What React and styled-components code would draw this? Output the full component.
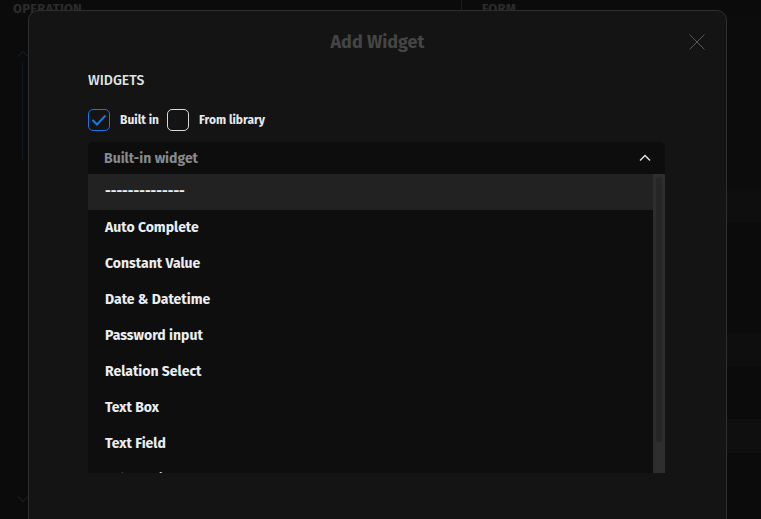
import styled, { createGlobalStyle } from 'styled-components';

const GlobalStyle = createGlobalStyle`
  html, body {
    margin: 0;
    padding: 0;
    background: #0b0b0b;
  }
  body {
    font-family: "Fira Sans", Roboto, "Noto Sans", sans-serif;
  }
`;

const Screen = styled.div`
  position: relative;
  width: 761px;
  height: 519px;
  overflow: hidden;
  background: #0b0b0b;
`;

// faint app behind the modal
const Backdrop = styled.div`
  display: grid;
  grid-template-columns: 462px 1fr;
  height: 100%;
`;

const LeftPane = styled.div`
  display: flex;
  flex-direction: column;
  padding: 1px 0 0 13px;
  border-right: 1px solid #1c1c1c;
`;

const RightPane = styled.div`
  display: flex;
  flex-direction: column;
  padding: 1px 0 0 20px;
`;

const PaneLabel = styled.div`
  font-size: 13px;
  font-weight: 700;
  color: #2c2c2c;
  letter-spacing: 0.2px;
`;

const SideRail = styled.div`
  display: flex;
  flex-direction: column;
  align-items: center;
  width: 20px;
  margin-top: 34px;
  flex: 1;
  padding-bottom: 16px;
`;

const RailLine = styled.div`
  width: 1px;
  height: 98px;
  margin: 4px 0 0 -2px;
  background: #101a26;
`;

const Spacer = styled.div`
  flex: 1;
`;

const BgRow = styled.div`
  height: ${(p) => p.h}px;
  margin-left: -20px;
  background: ${(p) => p.bg};
`;

const Modal = styled.div`
  position: absolute;
  left: 28px;
  top: 10px;
  width: 699px;
  height: 540px;
  background: #141414;
  border: 1px solid #2f2f2f;
  border-radius: 10px;
  box-sizing: border-box;
`;

const ModalHeader = styled.div`
  position: relative;
  height: 62px;
  display: flex;
  align-items: center;
  justify-content: center;
`;

const Title = styled.h2`
  margin: 0;
  font-size: 18px;
  font-weight: 700;
  color: #454545;
`;

const CloseButton = styled.button`
  position: absolute;
  right: 20px;
  top: 22px;
  width: 18px;
  height: 18px;
  padding: 0;
  border: none;
  background: none;
  display: flex;
`;

const ModalBody = styled.div`
  padding: 0 61px 0 59px;
`;

const SectionLabel = styled.div`
  font-size: 14px;
  line-height: 16px;
  font-weight: 500;
  color: #dfe3e6;
`;

const CheckRow = styled.div`
  display: flex;
  align-items: center;
  margin-top: 20px;
  height: 22px;
`;

const Check = styled.span`
  width: 22px;
  height: 22px;
  box-sizing: border-box;
  border: 1px solid ${(p) => (p.checked ? '#1677e5' : '#d9d9d9')};
  border-radius: 5px;
  display: flex;
  align-items: center;
  justify-content: center;
  margin-right: 10px;
`;

const CheckLabel = styled.span`
  font-size: 12px;
  font-weight: 700;
  color: #e6eaee;
  margin-right: 8px;
`;

const Select = styled.div`
  margin-top: 11px;
  width: 577px;
  border-radius: 6px 6px 0 0;
  background: #0e0e0e;
  overflow: hidden;
`;

const SelectHeader = styled.div`
  height: 32px;
  display: flex;
  align-items: center;
  justify-content: space-between;
  padding: 0 14px 0 16px;
  background: #0d0d0d;
`;

const Placeholder = styled.span`
  font-size: 14px;
  font-weight: 700;
  color: #858a8e;
`;

const ListWrap = styled.div`
  display: flex;
  height: 299px;
`;

const List = styled.ul`
  list-style: none;
  margin: 0;
  padding: 0;
  flex: 1;
  overflow: hidden;
`;

const Item = styled.li`
  height: 36px;
  box-sizing: border-box;
  display: flex;
  align-items: center;
  padding: 0 0 2px 17px;
  font-size: 14px;
  font-weight: 700;
  color: #e8eef2;
  background: ${(p) => (p.active ? '#222222' : 'transparent')};
`;

const Scrollbar = styled.div`
  width: 12px;
  background: #2e2e2e;
  display: flex;
  justify-content: center;
  padding-top: 3px;
  box-sizing: border-box;
`;

const Thumb = styled.div`
  width: 6px;
  height: 265px;
  border-radius: 3px;
  background: #262626;
`;

const items = [
  '--------------',
  'Auto Complete',
  'Constant Value',
  'Date & Datetime',
  'Password input',
  'Relation Select',
  'Text Box',
  'Text Field',
  'Value Editor',
];

export default function App() {
  return (
    <Screen>
      <GlobalStyle />
      <Backdrop>
        <LeftPane>
          <PaneLabel>OPERATION</PaneLabel>
          <SideRail>
            <svg width="12" height="8" viewBox="0 0 12 8">
              <path d="M1 6.5 6 1.5l5 5" fill="none" stroke="#15263a" strokeWidth="1" />
            </svg>
            <RailLine />
            <Spacer />
            <svg width="12" height="8" viewBox="0 0 12 8">
              <path d="M1 1.5 6 6.5l5-5" fill="none" stroke="#262626" strokeWidth="1" />
            </svg>
          </SideRail>
        </LeftPane>
        <RightPane>
          <PaneLabel>FORM</PaneLabel>
          <BgRow h={175} bg="#0c0c0c" />
          <BgRow h={32} bg="#0e0e0e" />
          <BgRow h={110} bg="#0b0b0b" />
          <BgRow h={34} bg="#0e0e0e" />
          <BgRow h={52} bg="#0b0b0b" />
          <BgRow h={34} bg="#0f0f0f" />
        </RightPane>
      </Backdrop>

      <Modal>
        <ModalHeader>
          <Title>Add Widget</Title>
          <CloseButton aria-label="close">
            <svg width="18" height="18" viewBox="0 0 18 18">
              <path d="M1.5 1.5l15 15M16.5 1.5l-15 15" stroke="#5a5a5a" strokeWidth="1" fill="none" />
            </svg>
          </CloseButton>
        </ModalHeader>
        <ModalBody>
          <SectionLabel>WIDGETS</SectionLabel>
          <CheckRow>
            <Check checked>
              <svg width="16" height="12" viewBox="0 0 16 12">
                <path d="M1.5 6l4.5 4.5L14.5 1.5" fill="none" stroke="#1677e5" strokeWidth="2" />
              </svg>
            </Check>
            <CheckLabel>Built in</CheckLabel>
            <Check />
            <CheckLabel>From library</CheckLabel>
          </CheckRow>
          <Select>
            <SelectHeader>
              <Placeholder>Built-in widget</Placeholder>
              <svg width="12" height="8" viewBox="0 0 12 8">
                <path d="M1 6.5 6 1.5l5 5" fill="none" stroke="#e0e6ea" strokeWidth="1.4" />
              </svg>
            </SelectHeader>
            <ListWrap>
              <List>
                {items.map((it, i) => (
                  <Item key={it} active={i === 0}>
                    {it}
                  </Item>
                ))}
              </List>
              <Scrollbar>
                <Thumb />
              </Scrollbar>
            </ListWrap>
          </Select>
        </ModalBody>
      </Modal>
    </Screen>
  );
}
